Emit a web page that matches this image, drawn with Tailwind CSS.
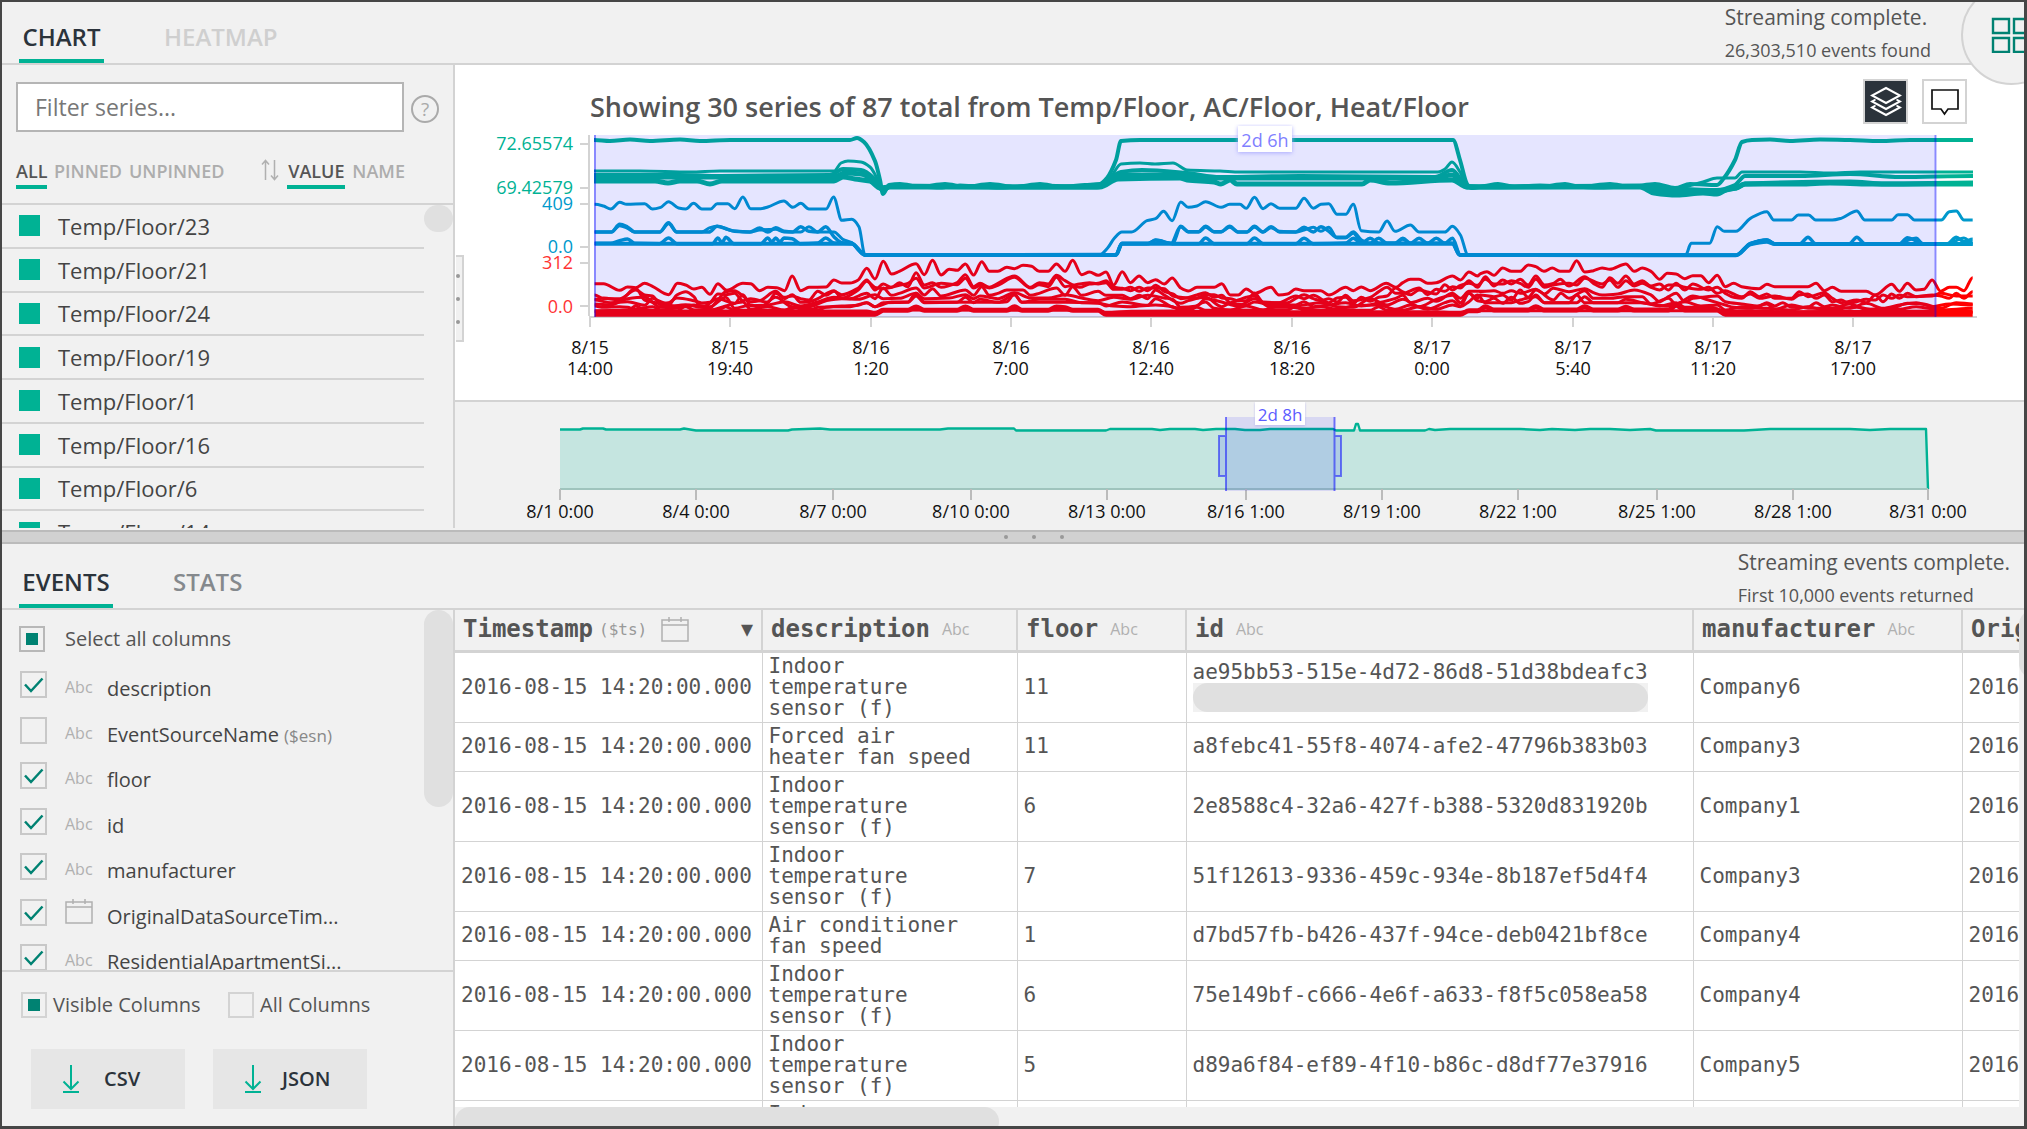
<!DOCTYPE html>
<html lang="en">
<head>
<meta charset="utf-8">
<title>Event explorer</title>
<script src="https://cdn.jsdelivr.net/npm/@tailwindcss/browser@4"></script>
</head>
<body class="bg-[#464646] font-['Open_Sans',sans-serif] text-[#555]">
<div class="h-screen pt-[2px] pl-[2px] pr-[3px] pb-[3px]">
<div class="flex h-full flex-col overflow-hidden bg-[#f1f1f1]">

  <!-- Chart pane -->
  <header class="relative flex h-[63px] shrink-0 justify-between border-b-2 border-[#d3d3d3]">
    <nav class="flex items-end gap-12 pl-[17px]">
      <button class="h-[48px] w-[85px] border-b-4 border-[#00b294] text-[24px] leading-[34px] font-semibold text-[#2b333b]">CHART</button>
      <button class="h-[48px] border-b-4 border-transparent px-3 text-[24px] leading-[34px] font-semibold text-[#cfcfcf]">HEATMAP</button>
    </nav>
    <div class="pr-[93px]">
      <p class="text-[21px] leading-[30px]">Streaming complete.</p>
      <p class="text-[18px] leading-[36px]">26,303,510 events found</p>
    </div>
    <button aria-label="Open menu" class="absolute -top-[18px] -right-[38px] z-10 flex size-[101px] items-center rounded-full border-2 border-[#d3d3d3] bg-[#f1f1f1] pl-[28px]">
      <svg class="size-[36px]" viewBox="0 0 36 36" fill="none" stroke="#008272" stroke-width="2.400"><path d="M2 2h16v14H2zM23 2h15v14H23zM2 21h16v14H2zM23 21h15v14H23z"/></svg>
    </button>
  </header>

  <section class="flex h-[463px] shrink-0">
    <aside class="relative flex w-[453px] shrink-0 flex-col border-r-2 border-[#d3d3d3]">
      <div class="flex items-center gap-[7px] pt-[17px] pl-[14px]">
        <input type="text" aria-label="Filter series" placeholder="Filter series..." class="h-[50px] w-[388px] border-2 border-[#b5b5b5] bg-white px-[17px] text-[23px] placeholder:text-[#777]">
        <button aria-label="Help" class="mt-[4px] size-7 rounded-full border-2 border-[#aaa] text-[19px] leading-6 text-[#aaa]">?</button>
      </div>
      <div class="mt-[20px] flex h-[51px] items-start pl-[14px] text-[18px] font-semibold text-[#adadad]">
        <button class="h-[37px] w-[31px] border-b-4 border-[#00b294] leading-[38px] text-[#555]">ALL</button>
        <button class="ml-[7px] leading-[38px]">PINNED</button>
        <button class="ml-[7px] leading-[38px]">UNPINNED</button>
        <button aria-label="Reverse order" class="mt-[7px] ml-auto"><svg class="h-[22px] w-[18px]" viewBox="0 0 18 22" fill="none" stroke="#b0b0b0" stroke-width="1.5"><path d="M4.500 21V2M1 5.500 4.500 1.500 8 5.500M13.500 1v19M10 16.500l3.500 4 3.500-4"/></svg></button>
        <button class="ml-[8px] h-[37px] w-[58px] border-b-4 border-[#00b294] leading-[38px] text-[#555]">VALUE</button>
        <button class="mr-[48px] ml-[7px] leading-[38px]">NAME</button>
      </div>
      <div class="relative flex-1 overflow-hidden border-t-2 border-[#d3d3d3]">
        <ul id="series" class="grid h-[350px] w-[422px] grid-rows-8"></ul>
        <div class="absolute top-0 right-0 h-[27px] w-[29px] rounded-full bg-[#e0e0e0]"></div>
      </div>
    </aside>

    <div class="relative flex min-w-0 flex-1 flex-col bg-white">
      <div class="absolute top-[190px] left-[1px] flex h-[87px] w-[8px] flex-col items-start justify-center gap-[19px] border-2 border-l-0 border-[#d3d3d3] bg-[#f1f1f1]">
        <i class="size-1 rounded-full bg-[#999]"></i><i class="size-1 rounded-full bg-[#999]"></i><i class="size-1 rounded-full bg-[#999]"></i>
      </div>
      <div class="flex h-[59px] shrink-0 items-start gap-[14px] pt-[14px] pr-[57px] pl-[135px]">
        <h1 class="mr-auto pt-[8px] text-[27px] leading-[40px] font-semibold">Showing 30 series of 87 total from Temp/Floor, AC/Floor, Heat/Floor</h1>
        <button aria-label="Stacked" class="flex size-[45px] items-center justify-center border-2 border-[#d3d3d3] bg-[#2b333b]">
          <svg class="size-8" viewBox="0 0 32 32" fill="none" stroke="#fff" stroke-width="2"><path d="M16 2 30 9.500 16 17 2 9.500zM5.500 13.500 2 15.500l14 7.500 14-7.500-3.500-2M5.500 19.500 2 21.500 16 29l14-7.500-3.500-2"/></svg>
        </button>
        <button aria-label="Tooltips" class="flex size-[45px] items-center justify-center border-2 border-[#d3d3d3] bg-white">
          <svg class="size-7" viewBox="0 0 28 28" fill="none" stroke="#111" stroke-width="1.700"><path d="M1 2h26v19H17l-3.500 5-3.500-5H1z"/></svg>
        </button>
      </div>
      <svg class="block w-full shrink-0" viewBox="455 124 1569 276" id="chart" role="img" aria-label="Series chart">
        <g stroke="#d3d3d3" stroke-width="2" fill="none">
          <path d="M589 135V316M580 144h9M580 188h9M580 204h9M580 247h9M580 263h9M580 306h9M589 317H1977"/>
          <path id="xticks"/>
        </g>
        <g font-size="18" text-anchor="end">
          <g fill="#00b294"><text x="573" y="150">72.65574</text><text x="573" y="194">69.42579</text></g>
          <g fill="#0099cc"><text x="573" y="210">409</text><text x="573" y="253">0.0</text></g>
          <g fill="#f33"><text x="573" y="269">312</text><text x="573" y="313">0.0</text></g>
        </g>
        <g id="xlabels" font-size="18" text-anchor="middle" fill="#111"></g>
        <g id="lines" fill="none" stroke-linejoin="round"></g>
        <rect x="594" y="135" width="1342" height="182" fill="#00f" fill-opacity=".1"/>
        <path d="M595 135V317M1935.500 135V317" stroke="#00f" stroke-opacity=".4" stroke-width="2"/>
        <rect x="1238" y="126" width="54" height="26" fill="#fff" style="filter:drop-shadow(0 1px 2px #aaaaff)"/>
        <text x="1265" y="147" font-size="18" text-anchor="middle" fill="#8080ff">2d 6h</text>
      </svg>
      <div class="border-t-2 border-[#d3d3d3] bg-[#f1f1f1]">
        <svg class="block w-full" viewBox="455 402 1569 126" role="img" aria-label="Overview">
          <path fill="#00b294" fill-opacity=".18" d="M560 489V429H1926L1928 489z"/>
          <path fill="none" stroke="#00b294" stroke-width="2.400" stroke-linejoin="round" d="M560 429.500H580L583 428.500H603L606 429.500H680L684 428.500 690 429.500 696 430.500H788L792 429.500 820 428.500 830 429.500H940L948 428.500H1014L1016 430.500H1106L1110 429 1152 429 1160 430 1170 429 1195 429 1203 430 1216 429H1235L1245 430H1260L1270 429H1333L1336 430.500H1354L1356 424H1358L1360 430.500H1425L1429 429 1435 430 1450 429H1520L1540 430 1552 429 1575 430 1590 429H1610L1630 430 1650 429 1656 430.500H1744L1770 429H1850L1870 430 1890 429H1926L1928 489"/>
          <path stroke="#9fc4bd" stroke-width="2" d="M560 489H1928"/>
          <path id="oticks" stroke="#bbb" stroke-width="2"/>
          <g id="olabels" font-size="18" text-anchor="middle" fill="#111"></g>
          <rect x="1226" y="417" width="109" height="74" fill="#00f" fill-opacity=".1"/>
          <path d="M1226 417V491M1334.500 417V491M1226 436H1219V476H1226M1335 436H1341V476H1335" fill="#00f" fill-opacity=".1" stroke="#00f" stroke-opacity=".5" stroke-width="2"/>
          <rect x="1255" y="402" width="50" height="23" fill="#fff" style="filter:drop-shadow(0 1px 1px #bbbbee)"/>
          <text x="1280" y="421" font-size="17" text-anchor="middle" fill="#5c5cff">2d 8h</text>
        </svg>
      </div>
    </div>
  </section>

  <div class="mt-[2px] flex h-[14px] shrink-0 items-center justify-center gap-6 border-y-2 border-[#bbb] bg-[#d1d1d1] pl-[42px]">
    <i class="size-1 rounded-full bg-[#999]"></i><i class="size-1 rounded-full bg-[#999]"></i><i class="size-1 rounded-full bg-[#999]"></i>
  </div>

  <!-- Events pane -->
  <header class="flex h-[66px] shrink-0 justify-between border-b-2 border-[#d3d3d3]">
    <nav class="flex items-end gap-12 pl-[17px]">
      <button class="h-[48px] w-[94px] border-b-4 border-[#00b294] text-[24px] leading-[34px] font-semibold text-[#2b333b]">EVENTS</button>
      <button class="h-[48px] border-b-4 border-transparent px-3 text-[24px] leading-[34px] font-semibold text-[#85898d]">STATS</button>
    </nav>
    <div class="pt-[3px] pr-[14px]">
      <p class="text-[21px] leading-[30px]">Streaming events complete.</p>
      <p class="text-[18px] leading-[36px]">First 10,000 events returned</p>
    </div>
  </header>

  <section class="flex min-h-0 flex-1">
    <aside class="flex w-[453px] shrink-0 flex-col border-r-2 border-[#d3d3d3]">
      <div class="relative h-[360px] overflow-hidden text-[20px]">
        <label class="flex h-[58px] items-center gap-5 pl-[17px]"><input type="checkbox" class="size-[26px] appearance-none border-2 border-[#b8b8b8] bg-[#008272] bg-clip-content p-[5px]">Select all columns</label>
        <div id="columns" class="grid h-[319px] w-[422px] grid-rows-7 text-[#444]"></div>
        <div class="absolute top-0 right-0 h-[197px] w-[29px] rounded-full bg-[#e0e0e0]"></div>
      </div>
      <div class="flex flex-1 flex-col border-t-2 border-[#d3d3d3] pt-[18px] text-[20px]">
        <div class="flex">
          <label class="flex w-[207px] items-center gap-[6px] pl-[19px] whitespace-nowrap"><input type="radio" name="scope" class="size-[26px] shrink-0 appearance-none border-2 border-[#d3d3d3] bg-[#008272] bg-clip-content p-[5px]" checked>Visible Columns</label>
          <label class="flex items-center gap-[6px] pl-[19px]"><input type="radio" name="scope" class="size-[26px] appearance-none border-2 border-[#d3d3d3]">All Columns</label>
        </div>
        <div class="mt-[29px] flex gap-7 pl-[29px] text-[20px] font-semibold text-[#2b333b]">
          <button class="flex h-[60px] w-[154px] items-center gap-6 bg-[#e6e6e6] pl-[31px]"><svg class="h-7 w-[18px]" viewBox="0 0 18 28" fill="none" stroke="#00b294" stroke-width="2"><path d="M9 0v24M1.500 16.500 9 24l7.500-7.500M1 27h16"/></svg>CSV</button>
          <button class="flex h-[60px] w-[154px] items-center gap-5 bg-[#e6e6e6] pl-[31px]"><svg class="h-7 w-[18px]" viewBox="0 0 18 28" fill="none" stroke="#00b294" stroke-width="2"><path d="M9 0v24M1.500 16.500 9 24l7.500-7.500M1 27h16"/></svg>JSON</button>
        </div>
      </div>
    </aside>

    <div class="flex min-w-0 flex-1 flex-col">
      <div class="flex min-h-0 flex-1">
        <div class="min-w-0 flex-1 overflow-hidden bg-white font-['DejaVu_Sans_Mono',monospace]">
          <table class="w-[1900px] table-fixed border-collapse text-[21px] leading-[21px]">
            <colgroup><col class="w-[307px]"><col class="w-[255px]"><col class="w-[169px]"><col class="w-[507px]"><col class="w-[269px]"><col></colgroup>
            <thead><tr id="head" class="h-[41px] border-b-3 border-[#d3d3d3] bg-[#f1f1f1] text-left"></tr></thead>
            <tbody id="rows"></tbody>
          </table>
        </div>
        <div class="w-[5px] shrink-0 overflow-hidden bg-[#f1f1f1]"><div class="h-[68px] w-[29px] rounded-full bg-[#e0e0e0]"></div></div>
      </div>
      <div class="h-[19px] shrink-0 overflow-hidden bg-[#f1f1f1]"><div class="h-[29px] w-[544px] rounded-full bg-[#e0e0e0]"></div></div>
    </div>
  </section>
</div>
</div>

<script>
const $ = id => document.getElementById(id);
const calendar = '<svg class="h-[25px] w-[28px] shrink-0" viewBox="0 0 28 25" fill="none" stroke="#b0b0b0" stroke-width="1.500"><path d="M1 3h26v21H1zM1 8h26M8 0v5M20 0v5"/></svg>';
const abc = '<span class="w-[28px] shrink-0 font-[\'Open_Sans\',sans-serif] text-[16px] font-normal text-[#b0b0b0]">Abc</span>';

$('series').innerHTML = [23, 21, 24, 19, 1, 16, 6, 14].map(n =>
  `<li class="flex items-center gap-[18px] border-b-2 border-[#d3d3d3] pl-[17px] text-[22px] leading-7 text-[#444]"><i class="size-[21px] bg-[#00b294]"></i>Temp/Floor/${n}</li>`).join('');

$('columns').innerHTML = [['description', 1], ['EventSourceName', 0, '($esn)'], ['floor', 1], ['id', 1], ['manufacturer', 1], ['OriginalDataSourceTim...', 1, '', 1], ['ResidentialApartmentSi...', 1]].map(([name, on, note, date]) =>
  `<label class="flex items-start pt-[3px] pl-[18px]"><span class="relative size-[27px]"><input type="checkbox" ${on ? 'checked' : ''} class="block size-[27px] appearance-none border-2 border-[#c8c8c8]">${on ? '<svg class="absolute top-[5px] left-[4px] h-[18px] w-[20px]" viewBox="0 0 20 18" fill="none" stroke="#008272" stroke-width="2.500"><path d="M1 8.500 7 15 18.500 2.500"/></svg>' : ''}</span><span class="ml-[18px] flex h-[32px] ${date ? 'items-start' : 'items-center'}">${date ? calendar : abc}</span><span class="ml-[14px] pt-[3px] leading-[30px]">${name} <span class="text-[17px] text-[#888]">${note || ''}</span></span></label>`).join('');

$('head').innerHTML = ['Timestamp', 'description', 'floor', 'id', 'manufacturer', 'OriginalDataSourceTimestamp'].map((h, i) =>
  `<th class="border-r-2 border-[#d3d3d3] px-[8px] text-[24px] font-bold"><span class="flex items-center whitespace-nowrap">${h}${i === 0 ? `<span class="ml-[6px] text-[16px] font-normal text-[#999]">($ts)</span><span class="ml-[14px]">${calendar}</span><span class="mr-0 ml-auto text-[20px]">▼</span>` : `<span class="ml-3 flex">${abc}</span>`}</span></th>`).join('');

const indoor = 'Indoor temperature sensor (f)';
$('rows').innerHTML = [
  [indoor, 11, 'ae95bb53-515e-4d72-86d8-51d38bdeafc3', 6],
  ['Forced air heater fan speed', 11, 'a8febc41-55f8-4074-afe2-47796b383b03', 3],
  [indoor, 6, '2e8588c4-32a6-427f-b388-5320d831920b', 1],
  [indoor, 7, '51f12613-9336-459c-934e-8b187ef5d4f4', 3],
  ['Air conditioner fan speed', 1, 'd7bd57fb-b426-437f-94ce-deb0421bf8ce', 4],
  [indoor, 6, '75e149bf-c666-4e6f-a633-f8f5c058ea58', 4],
  [indoor, 5, 'd89a6f84-ef89-4f10-b86c-d8df77e37916', 5],
  [indoor, '', '', '']
].map(([d, f, id, c], i) => {
  const td = 'border-r border-[#d3d3d3] px-[6px] py-[3px] whitespace-nowrap';
  return `<tr class="border-b border-[#d3d3d3]"><td class="${td}">${c && '2016-08-15 14:20:00.000'}</td><td class="border-r border-[#d3d3d3] py-[3px] pr-10 pl-[6px]">${d}</td><td class="${td}">${f}</td><td class="${td}">${id}${i ? '' : '<span class="block w-[455px] bg-[#f1f1f1]"><span class="block h-[29px] rounded-full bg-[#e0e0e0]"></span></span>'}</td><td class="${td}">${c && 'Company' + c}</td><td class="${td}">${c && '2016-08-15 14:20'}</td></tr>`;
}).join('');

const ticks = [[590, '8/15', '14:00'], [730, '8/15', '19:40'], [871, '8/16', '1:20'], [1011, '8/16', '7:00'], [1151, '8/16', '12:40'], [1292, '8/16', '18:20'], [1432, '8/17', '0:00'], [1573, '8/17', '5:40'], [1713, '8/17', '11:20'], [1853, '8/17', '17:00']];
$('xticks').setAttribute('d', ticks.map(t => `M${t[0]} 317v10`).join(''));
$('xlabels').innerHTML = ticks.map(t => `<text x="${t[0]}" y="354">${t[1]}</text><text x="${t[0]}" y="375">${t[2]}</text>`).join('');
const days = [[560, '8/1 0:00'], [696, '8/4 0:00'], [833, '8/7 0:00'], [971, '8/10 0:00'], [1107, '8/13 0:00'], [1246, '8/16 1:00'], [1382, '8/19 1:00'], [1518, '8/22 1:00'], [1657, '8/25 1:00'], [1793, '8/28 1:00'], [1928, '8/31 0:00']];
$('oticks').setAttribute('d', days.map(t => `M${t[0]} 489v11`).join(''));
$('olabels').innerHTML = days.map(t => `<text x="${t[0]}" y="518">${t[1]}</text>`).join('');

// Series samples. A letter switches to the frame (origin x, x scale, origin y, y scale) its points are stored in.
const frames = { A: [450, 1 / 2.8, 60, 1 / 3], B: [980, 1 / 2.904, 60, 1 / 3], C: [1480, 1 / 2.866, 0, 1 / 3], P: [0, 1, 0, 1] };
const teal = [
  [4, 'P 594,140 610,141 630,139.500 650,141 680,139.500 700,141 730,140 800,140 850,140 857,138 864,142 875,161 880,180 883,194 889,185 900,184 920,187 945,184 965,187 990,184 1015,187 1040,184 1060,187 1085,185 1100,184 1107,178 1116,160 1121,141 1140,140 1300,140 1453,140 1460,160 1467,184 1471,188 1485,186 1498,184 1515,187 1540,187 1565,184 1580,187 1610,184 1630,187 1655,184 1675,188 1690,184 1717,185 1724,178 1735,160 1742,142 1752,140 1770,139.500 1790,141 1820,139.500 1850,140 1880,141 1910,140 1973,140'],
  [3, 'P 594,171 640,171 690,172 720,171 834,171 841,163 848,161 861,162 870,167 878,180 883,190 889,187 905,186 940,188 960,185 1000,188 1035,185 1097,187 1110,178 1121,164 1140,163 1155,164 1173,163 1187,170 1220,171 1240,172 1438,172 1445,169 1452,162 1460,172 1467,186 1475,186 1500,187 1540,185 1600,188 1640,186 1670,189 1703,182 1717,178 1735,178 1742,172 1800,172 1830,173 1860,172 1973,172'],
  [4, 'P 594,175 680,175 720,176 830,175 843,169 861,170 876,180 883,190 890,187 1000,187 1097,187 1121,172 1142,170 1187,173 1220,177 1300,176 1435,177 1452,170 1467,186 1480,187 1640,187 1717,190 1735,185 1745,176 1800,176 1850,174 1900,177 1973,176'],
  [5, 'P 594,177 834,177 845,173 861,174 876,182 883,190 890,186 1000,187 1097,187 1118,175 1180,175 1200,178 1435,178 1452,175 1467,187 1500,187 1640,186 1660,190 1703,191 1717,191 1736,188 1745,184 1800,184 1830,183 1870,184 1973,184'],
  [5, 'P 594,181 655,181 668,183 680,181 697,181 710,184 722,181 834,181 843,177 855,179 870,181 880,188 890,187 1000,187 1100,187 1118,179 1180,178 1187,180 1214,182 1221,184 1230,180 1237,184 1362,184 1370,180 1390,183 1452,180 1467,187 1640,187 1654,193 1677,195 1703,193 1717,194 1728,189 1736,188 1745,184 1850,182 1885,184 1973,183']
];
const blue = [
  [3, 'A 405,433 430,438 450,447 475,427 495,433 545,431 567,447 590,442 612,425 640,444 660,447 682,430 705,447 730,447 748,431 778,431 797,446 820,411 842,446 870,446 890,441 935,423 960,442 982,430 1005,447 1053,447 1074,411 1097,481 1125,478 1145,500 1162,585 B 350,583 370,565 390,535 412,516 440,516 485,482 510,476 533,454 558,482 583,426 605,442 630,438 655,425 700,442 725,433 755,433 773,445 797,412 822,446 845,431 870,445 917,445 941,415 968,445 990,433 1013,431 1037,463 1062,463 1084,433 1107,512 1158,516 1182,483 1205,514 1250,495 1275,516 1350,516 1372,499 1395,525 1417,584 C 590,764 605,730 658,730 680,680 700,694 733,694 775,655 822,635 842,660 893,660 912,645 942,645 962,660 1010,660 1035,655 1080,633 1103,660 1180,660 1198,644 1225,644 1245,660 1322,660 1345,635 1365,633 1387,660 1412,660'],
  [3.5, 'A 405,516 452,516 475,493 497,501 517,516 587,516 612,488 635,516 725,516 748,499 775,507 797,514 840,516 867,504 890,516 912,503 935,514 960,516 982,500 1005,514 1030,516 1052,500 1075,530 1097,548 1125,550 1145,570 1162,585 B 395,584 412,550 555,550 583,499 605,515 635,515 655,499 680,515 700,515 725,499 750,516 775,516 797,499 822,516 845,500 870,516 917,516 941,502 968,516 990,500 1013,514 1037,532 1062,532 1084,516 1107,540 1133,550 1158,535 1182,550 1372,550 1392,585 C 733,766 775,732 822,720 845,732 1412,732'],
  [3, 'A 405,516 452,516 475,497 497,505 517,516 587,516 612,491 635,516 705,516 728,503 748,499 790,512 840,516 867,510 912,508 935,516 982,516 1005,500 1030,516 1075,516 1100,538 1125,548 1145,572 1162,585 B 395,584 412,551 485,551 510,540 560,551 583,501 605,516 635,516 655,502 680,516 700,516 725,502 750,516 775,516 797,502 822,516 845,503 870,514 917,516 941,510 968,502 990,514 1013,502 1037,534 1062,534 1084,520 1107,548 1205,550 1228,538 1250,550 1372,550 1392,585 C 733,766 775,730 822,720 845,731 1203,731 1225,722 1250,714 1270,731 1340,731 1387,714 1412,728'],
  [3.5, 'A 405,550 450,550 475,542 497,537 517,550 587,551 612,534 635,551 735,551 750,534 762,548 772,532 795,551 870,551 890,534 901,546 912,534 924,546 935,534 958,536 980,551 1030,549 1052,534 1075,549 1125,551 1162,585 B 395,585 412,551 490,551 510,540 560,551 635,551 655,534 680,551 775,551 797,534 822,551 917,551 941,535 968,551 1062,549 1084,535 1107,550 1133,535 1158,550 1205,550 1228,535 1250,550 1275,535 1300,550 1325,535 1350,550 1372,535 1395,585 C 733,766 775,730 822,720 845,731 917,731 940,712 962,731 1058,731 1080,712 1103,731 1203,731 1225,713 1245,720 1270,731 1340,731 1365,712 1387,725 1412,718'],
  [4, 'A 405,551 1125,551 1162,585 B 395,585 412,551 1372,551 1395,585 C 733,766 775,733 822,725 845,732 1412,732']
];
const red = [
  [3, 'A 405,671 430,671 475,691 497,681 520,683 545,670 567,679 612,704 637,670 660,675 683,687 705,682 728,703 750,671 775,691 820,670 842,671 867,692 890,682 915,683 937,692 958,648 982,692 1005,682 1053,681 1075,660 1097,669 1120,669 1143,660 1167,625 1190,657 1213,604 1236,642 1258,634 1305,611 1328,644 1351,601 1375,645 1398,628 1420,631 1443,612 1466,645 B 5,605 27,634 52,634 78,622 100,626 125,616 150,619 172,634 198,634 222,612 247,634 269,601 295,644 318,636 343,646 366,636 388,675 413,635 437,668 462,648 487,668 510,659 535,672 558,654 583,684 605,693 630,682 680,682 702,671 727,705 750,705 773,687 797,700 845,682 868,705 893,702 917,687 941,692 990,692 1013,705 1062,682 1084,692 1107,681 1133,692 1180,670 1207,682 1228,668 1250,658 1275,658 1300,670 1325,668 1372,648 1395,660 1420,636 1445,648 C 0,822 20,815 40,826 65,804 90,814 115,814 138,795 160,800 183,814 207,804 230,814 255,814 277,782 300,816 325,812 350,804 372,808 418,792 442,814 465,804 490,814 515,838 537,820 562,822 587,836 610,827 633,827 655,848 680,826 703,860 727,850 750,860 800,866 822,853 845,860 940,860 963,850 987,872 1010,862 1035,874 1107,874 1133,885 1180,853 1202,874 1225,850 1250,870 1272,868 1296,840 1320,874 1345,862 1365,862 1387,872 1412,833'],
  [3, 'A 405,705 430,716 475,716 520,690 545,705 567,708 590,734 612,735 635,705 660,695 683,710 700,740 725,745 750,720 772,695 797,692 820,708 842,725 867,722 912,694 935,712 958,708 982,716 1005,720 1030,694 1053,706 1075,694 1097,704 1143,684 1167,660 1190,690 1213,672 1236,682 1258,668 1282,680 1305,638 1328,675 1351,668 1375,682 1420,668 1443,644 1466,680 B 0,670 27,682 52,670 100,648 147,682 172,668 198,672 222,646 247,662 290,682 318,672 343,670 366,662 388,682 413,685 437,692 462,682 487,692 510,676 535,694 560,702 583,716 630,705 655,698 680,712 702,706 727,728 750,720 773,712 797,708 822,728 893,728 917,715 941,704 968,716 990,722 1013,716 1037,726 1062,706 1084,722 1133,712 1158,695 1182,682 1207,700 1228,700 1275,684 1300,704 1325,688 1350,694 1372,680 1395,684 1420,662 1445,682 C 15,830 40,858 65,840 90,852 115,838 138,855 160,828 185,855 210,850 230,838 255,858 300,830 325,850 350,862 372,833 395,850 418,828 442,852 465,842 490,858 515,852 540,870 562,850 587,870 610,852 655,870 680,862 703,880 727,892 750,895 775,875 800,890 822,882 845,895 893,895 915,875 940,890 963,885 987,878 1010,895 1035,908 1080,900 1107,908 1133,885 1155,905 1180,882 1202,895 1225,880 1250,890 1296,885 1320,888 1345,895 1365,880 1387,895 1412,875'],
  [3, 'A 405,718 430,714 475,720 520,685 545,720 567,726 590,730 612,728 635,714 683,722 705,729 728,727 750,702 772,704 797,700 820,722 842,716 890,727 912,700 937,716 958,704 982,727 1005,725 1030,716 1075,692 1097,714 1143,690 1167,664 1190,682 1213,686 1258,676 1282,670 1305,655 1328,684 1375,670 1420,674 1443,655 1466,684 B 0,676 27,684 52,676 100,652 147,684 172,674 198,680 222,652 247,680 269,676 318,668 343,672 366,668 388,688 413,688 437,682 462,694 487,684 510,684 535,686 560,708 583,712 605,714 630,714 655,704 680,704 702,714 727,716 750,722 773,722 797,700 822,726 868,728 917,708 941,716 968,706 1013,728 1037,714 1062,712 1084,730 1107,712 1133,724 1158,712 1182,708 1207,684 1228,696 1250,704 1275,690 1300,696 1325,702 1350,674 1372,690 1395,676 1420,670 1445,676 C 15,838 40,852 65,852 90,842 115,850 138,862 160,838 185,862 210,855 255,850 277,855 300,835 350,852 372,840 395,862 418,842 442,858 465,850 490,862 515,870 540,855 562,855 587,862 633,868 655,862 680,880 703,872 727,882 750,890 775,882 800,895 845,888 893,898 915,885 940,882 963,895 987,885 1010,905 1035,900 1058,910 1080,905 1107,898 1133,900 1155,885 1180,895 1202,885 1225,890 1296,888 1320,880 1365,888 1387,888 1412,888'],
  [3, 'A 405,732 450,735 497,716 545,712 590,742 612,740 660,734 705,742 750,716 797,730 820,704 842,737 890,735 937,725 982,738 1030,726 1075,712 1120,716 1167,700 1190,716 1213,684 1236,706 1258,700 1305,684 1328,705 1351,686 1375,708 1443,690 1466,706 B 5,680 27,706 52,700 78,690 125,690 147,706 172,700 222,684 247,706 269,680 295,706 343,694 366,706 413,706 437,716 462,706 487,716 510,690 535,705 583,730 605,722 655,712 702,740 727,730 773,735 797,726 845,734 917,735 941,725 968,740 1013,735 1062,728 1107,738 1158,728 1207,715 1228,706 1250,728 1300,715 1325,724 1372,700 1395,715 1420,694 1470,694 C 0,875 40,872 65,880 90,872 115,880 160,868 185,882 210,865 255,875 300,866 325,878 350,885 395,882 442,870 490,885 515,905 540,890 562,880 587,905 610,895 633,892 680,888 703,905 750,912 800,918 822,908 845,918 868,908 893,922 940,922 963,908 987,920 1010,915 1058,925 1107,910 1155,925 1202,915 1250,908 1296,920 1345,912 1412,915'],
  [3, 'A 405,720 450,728 497,725 545,736 567,715 590,725 635,740 683,735 728,740 772,712 797,745 842,735 867,742 912,712 958,740 1005,740 1053,722 1097,716 1143,718 1190,704 1213,716 1258,715 1305,700 1328,716 1398,714 1443,704 1466,716 B 0,708 52,716 100,698 147,714 198,714 247,704 295,714 343,722 388,712 437,718 487,706 535,714 560,718 583,742 630,738 655,716 702,726 750,738 797,716 845,742 893,742 941,735 990,728 1037,740 1084,742 1133,716 1182,735 1228,718 1275,740 1325,718 1372,706 1395,728 1420,700 1445,715 C 0,885 40,890 65,885 90,900 115,870 138,892 160,870 210,900 232,880 255,895 300,872 325,895 372,895 418,890 465,890 490,912 540,895 562,912 610,888 655,900 703,915 727,922 775,925 822,912 845,928 893,915 940,925 1010,925 1058,912 1107,928 1180,925 1225,910 1272,912 1320,925 1365,908 1412,912'],
  [3, 'A 405,738 430,742 475,740 497,742 520,748 567,740 590,750 660,740 683,750 728,750 772,738 820,726 842,748 890,740 937,750 982,742 1030,750 1053,742 1097,738 1143,736 1167,728 1190,740 1213,728 1282,727 1305,708 1328,728 1420,727 1443,712 1466,728 B 0,718 52,727 78,725 100,702 122,727 172,718 247,718 295,728 343,728 366,738 413,726 487,736 510,716 560,742 605,748 655,726 680,745 727,750 773,738 822,750 868,738 941,745 990,740 1037,748 1084,738 1158,735 1207,748 1250,735 1300,748 1350,728 1372,722 1395,738 1420,700 1445,722 C 15,905 40,895 65,910 90,892 115,910 138,905 160,885 185,908 255,908 277,885 300,908 395,908 418,898 465,908 490,912 540,918 587,905 633,918 680,915 703,930 750,920 822,925 893,930 940,920 987,930 1080,922 1133,930 1202,928 1250,920 1320,930 1412,925'],
  [3, 'A 405,752 500,750 520,738 545,750 637,752 660,738 683,751 750,751 772,740 797,751 937,751 958,742 1005,752 1030,742 1075,740 1120,740 1167,728 1190,740 1236,726 1282,726 1305,700 1328,726 1466,727 B 52,727 100,705 122,727 247,727 343,730 388,738 437,740 510,735 560,740 583,751 605,751 630,742 655,751 893,750 917,740 941,751 1133,751 1158,740 1182,751 1228,751 1275,740 1325,748 1372,735 1395,740 1420,725 1445,705 C 15,908 90,908 115,900 160,890 185,908 277,908 300,890 325,908 465,908 515,918 562,908 587,922 655,920 703,933 822,932 845,935 1412,933'],
  [5, 'A 405,763 1190,763 1213,751 1282,751 1305,741 1328,751 1420,751 1443,741 1466,751 B 78,751 100,740 122,751 198,751 222,741 247,743 270,751 343,751 366,763 1395,763 1420,752 1445,752 C 0,930 15,920 40,930 138,930 160,920 183,930 277,930 300,920 325,930 395,930 418,922 442,930 540,930 562,916 587,930 680,930 703,943 1412,943'],
  [3, 'A 405,754 500,754 600,753 1167,753 1190,757 1213,750 B 343,751 366,757 440,754 560,753 700,755 1300,755 1395,757 1420,752 C 680,932 703,938 800,937 1412,937']
];

function pathOf(text) {
  let f, p = [];
  for (const token of text.split(' ')) {
    if (frames[token]) { f = frames[token]; continue; }
    const [x, y] = token.split(',').map(Number);
    p.push([f[0] + x * f[1], f[2] + y * f[3]]);
  }
  // Horizontal-tangent easing at turning points keeps the curve within its samples.
  const slope = p.map((c, i) => {
    if (!i || i === p.length - 1) return 0;
    const a = (c[1] - p[i - 1][1]) / (c[0] - p[i - 1][0]), b = (p[i + 1][1] - c[1]) / (p[i + 1][0] - c[0]);
    return a * b <= 0 ? 0 : 2 * a * b / (a + b);
  });
  let d = `M${p[0]}`;
  for (let i = 1; i < p.length; i++) {
    const h = (p[i][0] - p[i - 1][0]) / 3;
    d += `C${p[i - 1][0] + h} ${p[i - 1][1] + slope[i - 1] * h} ${p[i][0] - h} ${p[i][1] - slope[i] * h} ${p[i]}`;
  }
  return d;
}
$('lines').innerHTML = [['#00b294', teal], ['#0099cc', blue], ['#ff0000', red]].map(([color, set]) =>
  set.map(([w, s]) => `<path stroke="${color}" stroke-width="${w}" d="${pathOf(s)}"/>`).join('')).join('');
</script>
</body>
</html>
